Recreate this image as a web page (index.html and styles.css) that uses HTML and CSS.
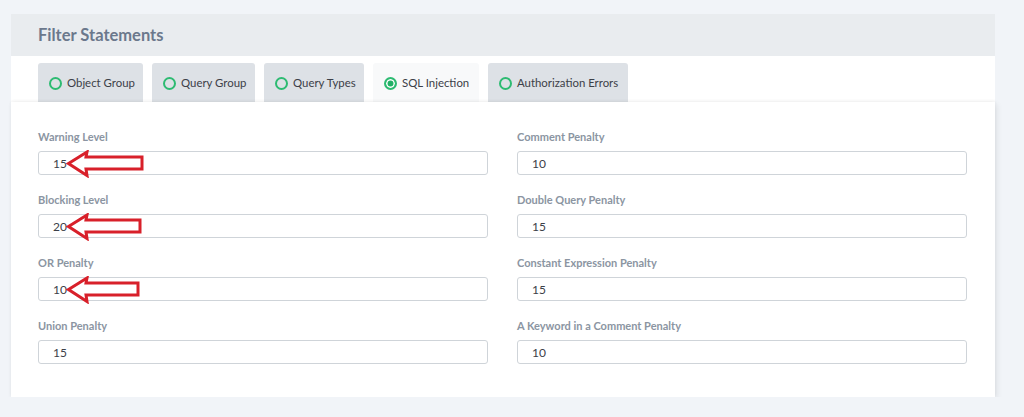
FILE: index.html
```html
<!DOCTYPE html>
<html>
<head>
<meta charset="utf-8">
<link rel="stylesheet" href="styles.css">
</head>
<body>
<div class="card">
  <div class="card-header">Filter Statements</div>
  <div class="tabs">
    <div class="tab"><span class="radio"></span>Object Group</div>
    <div class="tab"><span class="radio"></span>Query Group</div>
    <div class="tab"><span class="radio"></span>Query Types</div>
    <div class="tab active"><span class="radio checked"></span>SQL Injection</div>
    <div class="tab"><span class="radio"></span>Authorization Errors</div>
  </div>
  <div class="panel">
    <div class="field">
      <label class="label">Warning Level</label>
      <div class="input-wrap">
        <div class="input">15</div>
        <svg class="arrow" width="82" height="28" viewBox="0 0 82 28"><path d="M2.5 13.5 L21 2 L20 7 L76 7 L76 19 L20 19 L21 25.5 Z" fill="#fff" stroke="#d8202a" stroke-width="3" stroke-linejoin="miter"/></svg>
      </div>
    </div>
    <div class="field">
      <label class="label">Comment Penalty</label>
      <div class="input-wrap"><div class="input">10</div></div>
    </div>
    <div class="field">
      <label class="label">Blocking Level</label>
      <div class="input-wrap">
        <div class="input">20</div>
        <svg class="arrow" width="82" height="28" viewBox="0 0 82 28"><path d="M2.5 13.5 L21 2 L20 7 L74 7 L74 19 L20 19 L21 25.5 Z" fill="#fff" stroke="#d8202a" stroke-width="3" stroke-linejoin="miter"/></svg>
      </div>
    </div>
    <div class="field">
      <label class="label">Double Query Penalty</label>
      <div class="input-wrap"><div class="input">15</div></div>
    </div>
    <div class="field">
      <label class="label">OR Penalty</label>
      <div class="input-wrap">
        <div class="input">10</div>
        <svg class="arrow" width="82" height="28" viewBox="0 0 82 28"><path d="M2.5 13.5 L21 2 L20 7 L72 7 L72 19 L20 19 L21 25.5 Z" fill="#fff" stroke="#d8202a" stroke-width="3" stroke-linejoin="miter"/></svg>
      </div>
    </div>
    <div class="field">
      <label class="label">Constant Expression Penalty</label>
      <div class="input-wrap"><div class="input">15</div></div>
    </div>
    <div class="field">
      <label class="label">Union Penalty</label>
      <div class="input-wrap"><div class="input">15</div></div>
    </div>
    <div class="field">
      <label class="label">A Keyword in a Comment Penalty</label>
      <div class="input-wrap"><div class="input">10</div></div>
    </div>
  </div>
</div>
</body>
</html>
```
FILE: styles.css
```css
html, body {
  margin: 0;
  padding: 0;
  background: #f1f4f8;
  font-family: Lato, "Open Sans", sans-serif;
}
body {
  padding: 14px 29px 0 11px;
}
.card {
  width: 984px;
  background: #fff;
}
.card-header {
  height: 42px;
  box-sizing: border-box;
  padding: 0 27px;
  display: flex;
  align-items: center;
  background: #e9ecef;
  color: #6b788c;
  font-weight: 700;
  font-size: 16.5px;
}
.tabs {
  display: flex;
  gap: 9px;
  padding: 7px 27px 0;
  background: #fff;
}
.tab {
  height: 39px;
  box-sizing: border-box;
  display: flex;
  align-items: center;
  padding: 0 11px 0 11px;
  background: #dde1e6;
  border-radius: 3px 3px 0 0;
  font-size: 11.4px;
  color: #3c4048;
  white-space: nowrap;
}
.tab:nth-child(1) { width: 105px; }
.tab:nth-child(2) { width: 103px; }
.tab:nth-child(3) { width: 100px; }
.tab:nth-child(4) { width: 106px; }
.tab:nth-child(5) { width: 140px; }
.tab.active {
  background: #f8f9fa;
}
.radio {
  width: 9px;
  height: 9px;
  border: 2px solid #2dbb72;
  border-radius: 50%;
  margin-right: 5px;
  flex: none;
  position: relative;
  top: 1px;
}
.radio.checked {
  box-shadow: inset 0 0 0 1.5px #fff;
  background-color: #22b066;
}
.panel {
  display: grid;
  grid-template-columns: 450px 450px;
  column-gap: 29px;
  row-gap: 18px;
  padding: 28px 27px 33px;
  background: #fff;
  box-shadow: 0 -1px 3px rgba(0,0,0,0.05), 2px 2px 6px rgba(0,0,0,0.08);
  position: relative;
}
.field {
  display: flex;
  flex-direction: column;
}
.label {
  font-size: 11px;
  line-height: 14px;
  font-weight: 700;
  color: #8b95a2;
  margin-bottom: 7px;
}
.input-wrap {
  position: relative;
}
.input {
  height: 24px;
  box-sizing: border-box;
  border: 1px solid #cfd4d9;
  border-radius: 3px;
  padding: 0 14px;
  display: flex;
  align-items: center;
  font-size: 12px;
  color: #3c4048;
  background: #fff;
}
.arrow {
  position: absolute;
  left: 28px;
  top: -1px;
}
```
